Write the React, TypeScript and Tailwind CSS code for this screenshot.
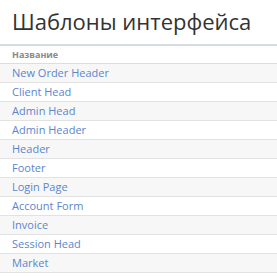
const rows = [
  "New Order Header",
  "Client Head",
  "Admin Head",
  "Admin Header",
  "Header",
  "Footer",
  "Login Page",
  "Account Form",
  "Invoice",
  "Session Head",
  "Market",
];

export default function App() {
  return (
    <div className="bg-white min-h-screen font-['Open_Sans',sans-serif]">
      <h1 className="px-3 pt-[6px] pb-[8px] text-[22px] leading-[30px] text-[#333] font-normal whitespace-nowrap">
        Шаблоны интерфейса
      </h1>
      <table className="w-full border-collapse border-t-2 border-[#d5dce4]">
        <thead>
          <tr className="h-[18px] border-b border-[#dddddd]">
            <th className="px-3 text-left text-[9px] font-bold text-[#8a8a8a]">Название</th>
          </tr>
        </thead>
        <tbody>
          {rows.map((name, i) => (
            <tr
              key={name}
              className={
                i % 2 === 0
                  ? "h-[18px] border-b border-[#e2e2e2] bg-[#f7f7f7]"
                  : "h-[18px] border-b border-[#e2e2e2] bg-white"
              }
            >
              <td className="px-3 py-0 text-[11px] leading-[18px] text-[#5a86cc]">
                <a href="#">{name}</a>
              </td>
            </tr>
          ))}
        </tbody>
      </table>
    </div>
  );
}
